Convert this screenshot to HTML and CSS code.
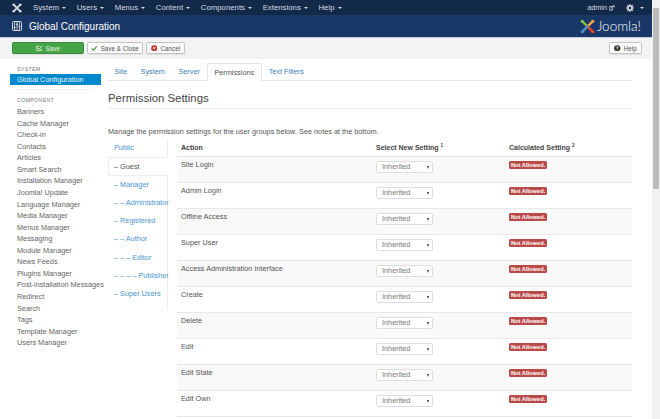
FILE: index.html
```html
<!DOCTYPE html>
<html lang="en">

<head>
    <meta charset="UTF-8">
    <meta name="viewport" content="width=device-width, initial-scale=1.0">
    <title>Global Configuration</title>
    <link rel="stylesheet" href="styles.css">
</head>

<body>
    <div class="page">
        <div class="content">
            <nav class="navbar">
                <svg class="nav-logo" viewBox="0 0 12 12"><path d="M2 2 L10 10 M10 2 L2 10" stroke="#d5dae2" stroke-width="2.4" fill="none"/><circle cx="2" cy="2" r="1.5" fill="#d5dae2"/><circle cx="10" cy="2" r="1.5" fill="#d5dae2"/><circle cx="2" cy="10" r="1.5" fill="#d5dae2"/><circle cx="10" cy="10" r="1.5" fill="#d5dae2"/></svg>
                <span class="nav-item">System <i class="caret"></i></span>
                <span class="nav-item">Users <i class="caret"></i></span>
                <span class="nav-item">Menus <i class="caret"></i></span>
                <span class="nav-item">Content <i class="caret"></i></span>
                <span class="nav-item">Components <i class="caret"></i></span>
                <span class="nav-item">Extensions <i class="caret"></i></span>
                <span class="nav-item">Help <i class="caret"></i></span>
                <span class="nav-user">admin
                    <svg class="ext-icon" viewBox="0 0 8 8"><path d="M1 2 H4.5 V7 H1 Z M3 4 L7 1 M5 1 H7 V3" stroke="#d5dae2" stroke-width="1" fill="none"/></svg>
                </span>
                <svg class="gear" viewBox="0 0 10 10"><circle cx="5" cy="5" r="2.6" fill="none" stroke="#e4e7ec" stroke-width="1.8"/><path d="M5 0 V2 M5 8 V10 M0 5 H2 M8 5 H10 M1.5 1.5 L3 3 M7 7 L8.5 8.5 M8.5 1.5 L7 3 M3 7 L1.5 8.5" stroke="#e4e7ec" stroke-width="1.5"/></svg>
                <i class="caret gear-caret"></i>
            </nav>

            <header class="header">
                <svg class="header-icon" viewBox="0 0 10 10"><rect x="0.5" y="0.5" width="9" height="9" rx="1" fill="none" stroke="#fff" stroke-width="0.8"/><path d="M2.6 1 V9 M5 1 V9 M7.4 1 V9" stroke="#fff" stroke-width="0.7"/><path d="M1.8 6.5 H3.4 M4.2 3.2 H5.8 M6.6 5.5 H8.2" stroke="#fff" stroke-width="1.1"/></svg>
                <h1 class="header-title">Global Configuration</h1>
                <div class="brand">
                    <svg class="brand-mark" viewBox="0 0 16 16">
                        <path d="M3 3 L8 8" stroke="#7ac143" stroke-width="2.6" stroke-linecap="round"/>
                        <path d="M13 3 L8 8" stroke="#f9a541" stroke-width="2.6" stroke-linecap="round"/>
                        <path d="M13 13 L8 8" stroke="#f44321" stroke-width="2.6" stroke-linecap="round"/>
                        <path d="M3 13 L8 8" stroke="#5091cd" stroke-width="2.6" stroke-linecap="round"/>
                        <circle cx="2.4" cy="2.4" r="1.7" fill="#7ac143"/>
                        <circle cx="13.6" cy="2.4" r="1.7" fill="#f9a541"/>
                        <circle cx="13.6" cy="13.6" r="1.7" fill="#f44321"/>
                        <circle cx="2.4" cy="13.6" r="1.7" fill="#5091cd"/>
                    </svg>
                    <span class="brand-name">Joomla!</span>
                </div>
            </header>

            <div class="toolbar">
                <button class="btn btn-save">
                    <svg class="btn-icon" viewBox="0 0 8 8"><path d="M6.5 4.5 V7 H1 V1.5 H4 M2.8 3.6 L4 5 L7.4 1" stroke="#fff" stroke-width="1" fill="none"/></svg>
                    Save
                </button>
                <button class="btn btn-close">
                    <svg class="btn-icon" viewBox="0 0 8 8"><path d="M1 4.2 L3 6.4 L7 1.6" stroke="#4f9f3d" stroke-width="1.6" fill="none"/></svg>
                    Save &amp; Close
                </button>
                <button class="btn btn-cancel">
                    <svg class="btn-icon" viewBox="0 0 8 8"><circle cx="4" cy="4" r="3.8" fill="#bd362f"/><path d="M2.5 2.5 L5.5 5.5 M5.5 2.5 L2.5 5.5" stroke="#fff" stroke-width="1.1"/></svg>
                    Cancel
                </button>
                <button class="btn btn-help">
                    <svg class="btn-icon" viewBox="0 0 8 8"><circle cx="4" cy="4" r="3.8" fill="#333"/><path d="M2.9 3 Q3 2 4 2 Q5.1 2 5.1 3 Q5.1 3.6 4 4.1 V4.8 M4 5.4 V6.3" stroke="#fff" stroke-width="0.9" fill="none"/></svg>
                    Help
                </button>
            </div>

            <div class="main">
                <aside class="sidebar">
                    <div class="side-label">SYSTEM</div>
                    <div class="side-active">Global Configuration</div>
                    <div class="side-divider"></div>
                    <div class="side-label side-label-second">COMPONENT</div>
                    <ul class="side-list">
                        <li>Banners</li>
                        <li>Cache Manager</li>
                        <li>Check-in</li>
                        <li>Contacts</li>
                        <li>Articles</li>
                        <li>Smart Search</li>
                        <li>Installation Manager</li>
                        <li>Joomla! Update</li>
                        <li>Language Manager</li>
                        <li>Media Manager</li>
                        <li>Menus Manager</li>
                        <li>Messaging</li>
                        <li>Module Manager</li>
                        <li>News Feeds</li>
                        <li>Plugins Manager</li>
                        <li>Post-installation Messages</li>
                        <li>Redirect</li>
                        <li>Search</li>
                        <li>Tags</li>
                        <li>Template Manager</li>
                        <li>Users Manager</li>
                    </ul>
                </aside>

                <section class="panel">
                    <div class="tabs">
                        <span class="tab">Site</span>
                        <span class="tab">System</span>
                        <span class="tab">Server</span>
                        <span class="tab tab-active">Permissions</span>
                        <span class="tab">Text Filters</span>
                    </div>

                    <h2 class="section-title">Permission Settings</h2>
                    <p class="section-desc">Manage the permission settings for the user groups below. See notes at the bottom.</p>

                    <div class="perm">
                        <ul class="groups">
                            <li>Public</li>
                            <li class="group-active">&ndash; Guest</li>
                            <li>&ndash; Manager</li>
                            <li>&ndash; &ndash; Administrator</li>
                            <li>&ndash; Registered</li>
                            <li>&ndash; &ndash; Author</li>
                            <li>&ndash; &ndash; &ndash; Editor</li>
                            <li>&ndash; &ndash; &ndash; &ndash; Publisher</li>
                            <li>&ndash; Super Users</li>
                        </ul>

                        <table class="perm-table">
                            <thead>
                                <tr>
                                    <th class="col-action">Action</th>
                                    <th class="col-select">Select New Setting <sup>1</sup></th>
                                    <th>Calculated Setting <sup>2</sup></th>
                                </tr>
                            </thead>
                            <tbody>
                                <tr><td>Site Login</td><td><div class="select">Inherited<i class="select-arrow"></i></div></td><td><span class="badge">Not Allowed.</span></td></tr>
                                <tr><td>Admin Login</td><td><div class="select">Inherited<i class="select-arrow"></i></div></td><td><span class="badge">Not Allowed.</span></td></tr>
                                <tr><td>Offline Access</td><td><div class="select">Inherited<i class="select-arrow"></i></div></td><td><span class="badge">Not Allowed.</span></td></tr>
                                <tr><td>Super User</td><td><div class="select">Inherited<i class="select-arrow"></i></div></td><td><span class="badge">Not Allowed.</span></td></tr>
                                <tr><td>Access Administration Interface</td><td><div class="select">Inherited<i class="select-arrow"></i></div></td><td><span class="badge">Not Allowed.</span></td></tr>
                                <tr><td>Create</td><td><div class="select">Inherited<i class="select-arrow"></i></div></td><td><span class="badge">Not Allowed.</span></td></tr>
                                <tr><td>Delete</td><td><div class="select">Inherited<i class="select-arrow"></i></div></td><td><span class="badge">Not Allowed.</span></td></tr>
                                <tr><td>Edit</td><td><div class="select">Inherited<i class="select-arrow"></i></div></td><td><span class="badge">Not Allowed.</span></td></tr>
                                <tr><td>Edit State</td><td><div class="select">Inherited<i class="select-arrow"></i></div></td><td><span class="badge">Not Allowed.</span></td></tr>
                                <tr><td>Edit Own</td><td><div class="select">Inherited<i class="select-arrow"></i></div></td><td><span class="badge">Not Allowed.</span></td></tr>
                            </tbody>
                        </table>
                    </div>
                </section>
            </div>
        </div>

        <div class="scrollbar">
            <div class="scroll-arrow"></div>
            <div class="scroll-thumb"></div>
        </div>
    </div>
</body>

</html>
```
FILE: styles.css
```css
html, body {
    margin: 0;
    padding: 0;
    height: 100%;
    overflow: hidden;
}

body {
    font-family: "Liberation Sans", Arial, sans-serif;
    font-size: 7.3px;
    color: #555;
    background: #fff;
}

.page {
    display: flex;
    width: 660px;
    height: 419px;
    overflow: hidden;
}

.content {
    flex: 1;
    min-width: 0;
}

/* top bar */
.navbar {
    display: flex;
    align-items: center;
    height: 15px;
    background: #13294a;
    color: #d5dae2;
    font-size: 7.8px;
}

.nav-logo {
    width: 10px;
    height: 10px;
    margin: 0 8px 0 12px;
}

.nav-item {
    margin: 0 7.5px 0 3px;
    white-space: nowrap;
}

.caret {
    display: inline-block;
    width: 0;
    height: 0;
    margin: 0 0 1px 1px;
    border-top: 2px solid #d5dae2;
    border-left: 2px solid transparent;
    border-right: 2px solid transparent;
}

.nav-user {
    margin-left: auto;
    display: flex;
    align-items: center;
    gap: 2px;
    font-size: 7.3px;
}

.ext-icon {
    width: 6px;
    height: 6px;
}

.gear {
    width: 8px;
    height: 8px;
    margin-left: 11px;
}

.gear-caret {
    margin: 0 8px 0 6px;
}

/* title bar */
.header {
    display: flex;
    align-items: center;
    height: 22px;
    background: #1a3867;
    border-bottom: 1px solid #c6cfe0;
    box-sizing: content-box;
    color: #fff;
}

.header-icon {
    width: 10px;
    height: 10px;
    margin-left: 12px;
}

.header-title {
    margin: 0 0 0 7px;
    font-size: 10px;
    font-weight: 400;
}

.brand {
    margin-left: auto;
    margin-right: 11px;
    display: flex;
    align-items: center;
    gap: 2px;
}

.brand-mark {
    width: 15px;
    height: 15px;
}

.brand-name {
    font-family: Lato, sans-serif;
    font-weight: 300;
    font-size: 13.5px;
    color: #fff;
}

/* toolbar */
.toolbar {
    display: flex;
    align-items: flex-start;
    gap: 3px;
    height: 21px;
    padding: 4px 10px 0 12px;
    box-sizing: border-box;
    background: #f3f3f3;
}

.btn {
    display: flex;
    align-items: center;
    justify-content: center;
    gap: 3px;
    height: 12px;
    padding: 0;
    border: 1px solid #c4c4c4;
    border-radius: 1.5px;
    background: #fafafa;
    color: #555;
    font-family: inherit;
    font-size: 6.3px;
    box-shadow: 0 1px 1px rgba(0, 0, 0, 0.08);
}

.btn-icon {
    width: 6.5px;
    height: 6.5px;
}

.btn-save {
    width: 72px;
    background: #46a546;
    border-color: #3b8a3b;
    color: #e6f2e6;
}

.btn-close {
    width: 56px;
}

.btn-cancel {
    width: 39px;
}

.btn-help {
    width: 33px;
    margin-left: auto;
}

/* sidebar and content */
.main {
    display: flex;
}

.sidebar {
    width: 91px;
    margin-left: 10px;
    flex-shrink: 0;
}

.side-label {
    padding: 7px 0 2px 7px;
    font-size: 5.3px;
    line-height: 6px;
    letter-spacing: 0.3px;
    color: #777;
}

.side-active {
    height: 11px;
    padding-left: 7px;
    line-height: 11px;
    background: #0088cc;
    color: #e6f3fa;
    font-size: 7.3px;
}

.side-divider {
    height: 1px;
    margin: 4px 8px 0 7px;
    background: #f0f0f0;
}

.side-label-second {
    padding-top: 7px;
}

.side-list {
    list-style: none;
    margin: 1px 0 0;
    padding: 0 0 0 7px;
}

.side-list li {
    height: 11.57px;
    line-height: 11.57px;
    white-space: nowrap;
    color: #666;
}

.panel {
    width: 524px;
    margin-left: 7px;
    padding-top: 4px;
}

.tabs {
    display: flex;
    height: 18px;
    box-sizing: border-box;
    border-bottom: 1px solid #e6e6e6;
    color: #3c7fb8;
}

.tab {
    padding: 0 6.5px;
    line-height: 18px;
    margin-right: 0.5px;
}

.tab-active {
    height: 18px;
    box-sizing: border-box;
    border: 1px solid #e6e6e6;
    border-bottom: 0;
    background: #fff;
    color: #555;
    line-height: 17px;
}

.section-title {
    margin: 11px 0 0;
    padding-bottom: 3px;
    border-bottom: 1px solid #eee;
    font-size: 11.4px;
    line-height: 13px;
    font-weight: 400;
    color: #444;
}

.section-desc {
    margin: 18px 0 0;
    line-height: 9px;
    color: #555;
}

.perm {
    display: flex;
    margin-top: 3px;
}

.groups {
    list-style: none;
    width: 60px;
    margin: 0;
    padding: 0;
    border-right: 1px solid #eee;
    box-sizing: border-box;
    color: #4a96d2;
    flex-shrink: 0;
    height: 171px;
}

.groups li {
    height: 18.3px;
    line-height: 18.3px;
    padding-left: 6px;
    white-space: nowrap;
    box-sizing: border-box;
}

.groups .group-active {
    width: 60px;
    background: #fff;
    color: #555;
    border: 1px solid #eee;
    border-right: 0;
    padding-left: 5px;
    line-height: 17px;
}

.perm-table {
    width: 455px;
    margin: 0 0 0 9px;
    border-collapse: collapse;
    table-layout: fixed;
    height: 0;
}

.perm-table th {
    height: 17px;
    padding: 0 0 0 4px;
    text-align: left;
    color: #444;
    font-weight: 700;
    font-size: 7px;
    border-bottom: 1px solid #e4e4e4;
}

.perm-table sup {
    font-size: 4.5px;
    line-height: 0;
}

.col-action {
    width: 191px;
}

.col-select {
    width: 129px;
}

.perm-table td {
    height: 25px;
    padding: 0 0 0 4px;
    vertical-align: top;
    border-bottom: 1px solid #e8e8e8;
    line-height: 16px;
    color: #555;
}

.perm-table tbody tr:nth-child(odd) td {
    background: #f9f9f9;
}

.select {
    position: relative;
    width: 57px;
    height: 12px;
    margin-top: 4px;
    padding-left: 5px;
    box-sizing: border-box;
    border: 1px solid #ddd;
    border-radius: 1.5px;
    background: #fff;
    line-height: 10px;
    color: #777;
}

.select-arrow {
    position: absolute;
    right: 3px;
    top: 4px;
    width: 0;
    height: 0;
    border-top: 3px solid #333;
    border-left: 1.5px solid transparent;
    border-right: 1.5px solid transparent;
}

.badge {
    display: inline-block;
    height: 8px;
    margin-top: 4px;
    padding: 0 2px;
    vertical-align: top;
    border-radius: 1.5px;
    background: #b94a48;
    color: #fff;
    font-size: 5.7px;
    font-weight: 700;
    line-height: 8px;
}

/* scrollbar */
.scrollbar {
    width: 8px;
    flex-shrink: 0;
    background: #f1f1f1;
}

.scroll-arrow {
    height: 8px;
}

.scroll-thumb {
    height: 181px;
    margin: 0 1px;
    background: #bcbcbc;
}
```
